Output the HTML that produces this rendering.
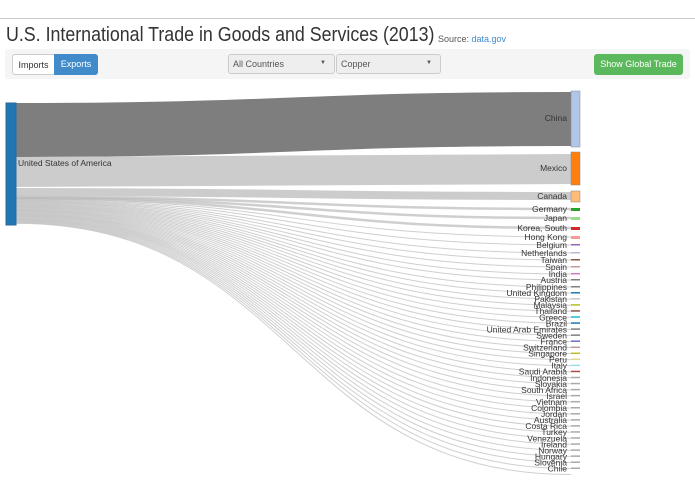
<!DOCTYPE html>
<html><head><meta charset="utf-8"><style>
body{margin:0;width:695px;height:494px;overflow:hidden;background:#fff;font-family:"Liberation Sans",sans-serif;position:relative}
.hr{position:absolute;left:0;top:18px;width:695px;height:1px;background:#ccc}
h1{position:absolute;left:6px;top:24px;margin:0;font-weight:normal;font-size:20px;color:#333;white-space:nowrap;transform:scaleX(0.89);transform-origin:0 0}
.src{position:absolute;left:438px;top:34px;font-size:9px;color:#555;white-space:nowrap}
.src a{color:#428bca}
.bar{position:absolute;left:5px;top:49px;width:685px;height:30px;background:#f5f5f5;border-radius:3px}
.btn{position:absolute;font-size:9px;box-sizing:border-box;border-radius:3px;text-align:center}
.sel{position:absolute;top:5px;height:20px;font-size:9px;color:#555;background:#eee;border:1px solid #ccc;border-radius:3px;box-sizing:border-box;padding:4px 4px}
.sel span{position:absolute;right:8px;top:5px;font-size:6px}
</style></head><body>
<div class="hr"></div>
<h1>U.S. International Trade in Goods and Services (2013)</h1>
<div class="src">Source: <a>data.gov</a></div>
<div class="bar">
<div class="btn" style="left:7px;top:5px;width:43px;height:21px;background:#fff;border:1px solid #ccc;border-radius:3px 0 0 3px;padding-top:5px;color:#333">Imports</div>
<div class="btn" style="left:49px;top:5px;width:44px;height:21px;background:#428bca;color:#fff;border-radius:0 3px 3px 0;padding-top:5px">Exports</div>
<div class="sel" style="left:223px;width:107px">All Countries<span>▼</span></div>
<div class="sel" style="left:331px;width:105px">Copper<span>▼</span></div>
<div class="btn" style="left:589px;top:5px;width:89px;height:21px;background:#5cb85c;color:#fff;padding-top:5px">Show Global Trade</div>
</div>
<svg id="s" width="695" height="494" style="position:absolute;left:0;top:0"></svg>
<script>
var names=["Germany","Japan","Korea, South","Hong Kong","Belgium","Netherlands","Taiwan","Spain","India","Austria","Philippines","United Kingdom","Pakistan","Malaysia","Thailand","Greece","Brazil","United Arab Emirates","Sweden","France","Switzerland","Singapore","Peru","Italy","Saudi Arabia","Indonesia","Slovakia","South Africa","Israel","Vietnam","Colombia","Jordan","Australia","Costa Rica","Turkey","Venezuela","Ireland","Norway","Hungary","Slovenia","Chile","Other"];
var ys=[209,218,228,237,245,253,260,267,274,280];
for(var i=10;i<names.length;i++)ys.push(287+(i-10)*6.05);
var cols=["#2ca02c","#98df8a","#d62728","#ff9896","#9467bd","#c5b0d5","#8c564b","#c49c94","#e377c2","#7f7f7f","#7f7f7f","#1f77b4","#c7c7c7","#bcbd22","#8c564b","#17becf","#1f77b4","#7f7f7f","#7f7f7f","#6b6ecf","#c49c94","#bcbd22","#dbdb8d","#9edae5","#ad494a","#aaa","#aaa","#aaa","#aaa","#aaa","#aaa","#aaa","#aaa","#aaa","#aaa","#aaa","#aaa","#aaa","#aaa","#aaa","#aaa","#aaa"];
var h='';
function link(y0,y1,w,c,o){var m=293;h+='<path d="M16,'+y0+'C'+m+','+y0+' '+m+','+y1+' 571,'+y1+'" fill="none" stroke="'+c+'" stroke-opacity="'+o+'" stroke-width="'+w+'"/>';}
link(130,119,54,"#777",0.95);
link(172,169,30,"#ccc",1);
link(192,196,8,"#ccc",1);
var n=names.length;
for(var i=0;i<n;i++){var sy=197+i*(27/n);link(sy,ys[i],i<3?2.5:1,"#bbb",0.7);}
h+='<rect x="6" y="103" width="10" height="122" fill="#1f77b4" stroke="#2a6a9a"/>';
h+='<text x="18" y="166" font-size="8.5" fill="#333">United States of America</text>';
function node(y,hh,c,label,ly){h+='<rect x="571" y="'+y+'" width="9" height="'+hh+'" fill="'+c+'" stroke="#888" stroke-width="0.5"/>';h+='<text x="567" y="'+ly+'" text-anchor="end" font-size="8.5" fill="#333">'+label+'</text>';}
node(91,56,"#aec7e8","China",121);
node(152,33,"#ff7f0e","Mexico",171);
node(191,11,"#ffbb78","Canada",199);
for(var i=0;i<n-1;i++){h+='<rect x="571" y="'+(ys[i]-1)+'" width="9" height="'+(i<4?3:1.5)+'" fill="'+cols[i]+'"/>';h+='<text x="567" y="'+(ys[i]+3)+'" text-anchor="end" font-size="8.5" fill="#333">'+names[i]+'</text>';}
document.getElementById('s').innerHTML=h;
</script>
</body></html>
